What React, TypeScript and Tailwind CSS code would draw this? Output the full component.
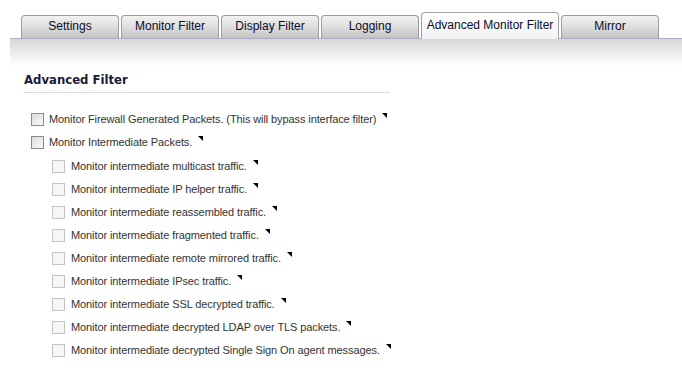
const tabs = [
  { name: "Settings", w: "w-[98px]" },
  { name: "Monitor Filter", w: "w-[98px]" },
  { name: "Display Filter", w: "w-[98px]" },
  { name: "Logging", w: "w-[98px]" },
  { name: "Advanced Monitor Filter", w: "w-[138px]", active: true },
  { name: "Mirror", w: "w-[98px]" },
];

const subOptions = [
  "Monitor intermediate multicast traffic.",
  "Monitor intermediate IP helper traffic.",
  "Monitor intermediate reassembled traffic.",
  "Monitor intermediate fragmented traffic.",
  "Monitor intermediate remote mirrored traffic.",
  "Monitor intermediate IPsec traffic.",
  "Monitor intermediate SSL decrypted traffic.",
  "Monitor intermediate decrypted LDAP over TLS packets.",
  "Monitor intermediate decrypted Single Sign On agent messages.",
];

function HelpMark() {
  return (
    <svg width="5" height="5" viewBox="0 0 5 5" className="ml-[6px] self-start mt-[2px] shrink-0">
      <polygon points="0,0 5,0 5,5" fill="#000" />
    </svg>
  );
}

function Checkbox({ disabled }: { disabled?: boolean }) {
  return (
    <span
      className={`inline-block w-[13px] h-[13px] shrink-0 border ${
        disabled
          ? "border-[#c4c4c4] bg-[#f6f6f6]"
          : "border-[#8a8a8a] bg-gradient-to-br from-[#dcdcdc] to-[#fafafa]"
      }`}
    />
  );
}

function Row({ label, disabled, indent }: { label: string; disabled?: boolean; indent?: boolean }) {
  return (
    <div className={`flex items-center h-[23px] ${indent ? "pl-[28px]" : "pl-[7px]"}`}>
      <Checkbox disabled={disabled} />
      <span className={`flex items-start ${indent ? "ml-[6px]" : "ml-[5px]"}`}>
        <span>{label}</span>
        <HelpMark />
      </span>
    </div>
  );
}

export default function App() {
  return (
    <div className="w-[682px] h-[370px] bg-white overflow-hidden text-[#222] font-['Liberation_Sans',sans-serif]">
      {/* TABS */}
      <div className="pt-[12px] pl-[10px]">
        <div className="flex items-end gap-[2px] pl-[11px] h-[26px] relative z-10">
          {tabs.map((tab) =>
            tab.active ? (
              <div
                key={tab.name}
                className={`${tab.w} h-[27px] -mb-px rounded-t-[4px] border border-b-0 border-[#a0a0a0] bg-gradient-to-b from-white to-[#f2f2f6] flex justify-center pt-[3px] text-[12px] text-[#0b0b2a]`}
              >
                {tab.name}
              </div>
            ) : (
              <div
                key={tab.name}
                className={`${tab.w} h-[23px] rounded-t-[4px] border border-b-0 border-[#9c9c9c] bg-gradient-to-b from-[#f2f2f2] via-[#dedede] to-[#c4c4c4] flex justify-center pt-[1px] text-[12px] text-[#0b0b2a]`}
              >
                {tab.name}
              </div>
            )
          )}
        </div>
        <div className="h-[28px] border-t border-[#aeaec4] bg-gradient-to-b from-[#d6d6d6] to-white" />
      </div>

      {/* CONTENT */}
      <div className="pl-[24px] pt-[6px]">
        <div className="w-[366px] border-b border-[#dedede] pb-[2px] text-[11.7px] font-bold text-[#1a1a3a] font-['DejaVu_Sans',sans-serif]">
          Advanced Filter
        </div>
        <div className="mt-[15px] text-[11px] tracking-[-0.1px] text-[#333]">
          <Row label="Monitor Firewall Generated Packets. (This will bypass interface filter)" />
          <Row label="Monitor Intermediate Packets." />
          <div className="mt-px">
            {subOptions.map((s) => (
              <Row key={s} label={s} disabled indent />
            ))}
          </div>
        </div>
      </div>
    </div>
  );
}
